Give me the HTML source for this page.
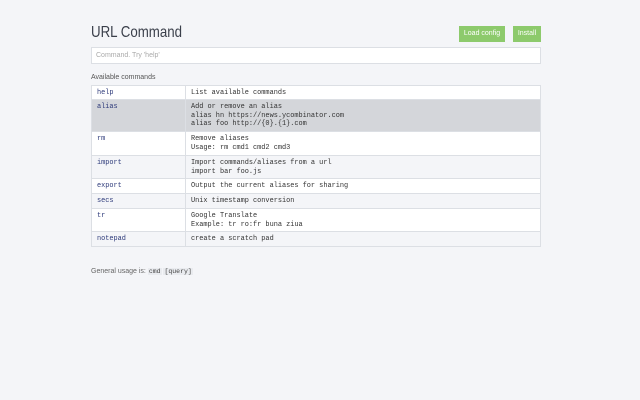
<!DOCTYPE html><html><head><style>
*{margin:0;padding:0;box-sizing:border-box}
body{width:640px;height:400px;background:#f4f5f8;font-family:"Liberation Sans",sans-serif;position:relative;overflow:hidden;color:#555}
.t{position:absolute;left:91px;top:24px;font-size:16px;color:#3a3f4a;transform:scaleX(0.83);transform-origin:left top;white-space:nowrap}
.b{position:absolute;top:26px;height:16px;background:#8dca6c;color:#fff;font-size:7px;line-height:16px;text-align:center}
.in{position:absolute;left:91px;top:47px;width:450px;height:17px;background:#fff;border:1px solid #dcdfe4;font-size:7px;color:#aaa;padding-left:4px;line-height:15px}
.ac{position:absolute;left:91px;top:74px;font-size:7px;color:#555}
table{position:absolute;left:91px;top:85px;width:450px;border-collapse:collapse;font-family:"Liberation Mono",monospace;font-size:6.9px;color:#333;border:1px solid #dcdfe4}
td{border:1px solid #dcdfe4;vertical-align:top;padding:3px 5px 0;line-height:8.7px;white-space:nowrap}
td:first-child{width:94px;color:#2d3a7a}
tr.h{background:#d4d6da}
.g{position:absolute;left:91px;top:268px;font-size:7px;color:#666}
.g code{font-family:"Liberation Mono",monospace;background:#e9ebef;padding:0 1px;font-size:6.5px;color:#444}
</style></head><body>
<div class="t">URL Command</div>
<div class="b" style="left:459px;width:46px">Load config</div>
<div class="b" style="left:513px;width:28px">Install</div>
<div class="in">Command. Try 'help'</div>
<div class="ac">Available commands</div>
<table>
<tr style="height:14px;background:#fff"><td>help</td><td>List available commands</td></tr>
<tr class="h" style="height:32px"><td>alias</td><td>Add or remove an alias<br>alias hn https://news.ycombinator.com<br>alias foo http://{0}.{1}.com</td></tr>
<tr style="height:24px;background:#fff"><td>rm</td><td>Remove aliases<br>Usage: rm cmd1 cmd2 cmd3</td></tr>
<tr style="height:23px;background:#f4f5f8"><td>import</td><td>Import commands/aliases from a url<br>import bar foo.js</td></tr>
<tr style="height:15px;background:#fff"><td>export</td><td>Output the current aliases for sharing</td></tr>
<tr style="height:15px;background:#f4f5f8"><td>secs</td><td>Unix timestamp conversion</td></tr>
<tr style="height:23px;background:#fff"><td>tr</td><td>Google Translate<br>Example: tr ro:fr buna ziua</td></tr>
<tr style="height:15px;background:#f4f5f8"><td>notepad</td><td>create a scratch pad</td></tr>
</table>
<div class="g">General usage is: <code>cmd</code> <code>[query]</code></div>
</body></html>
